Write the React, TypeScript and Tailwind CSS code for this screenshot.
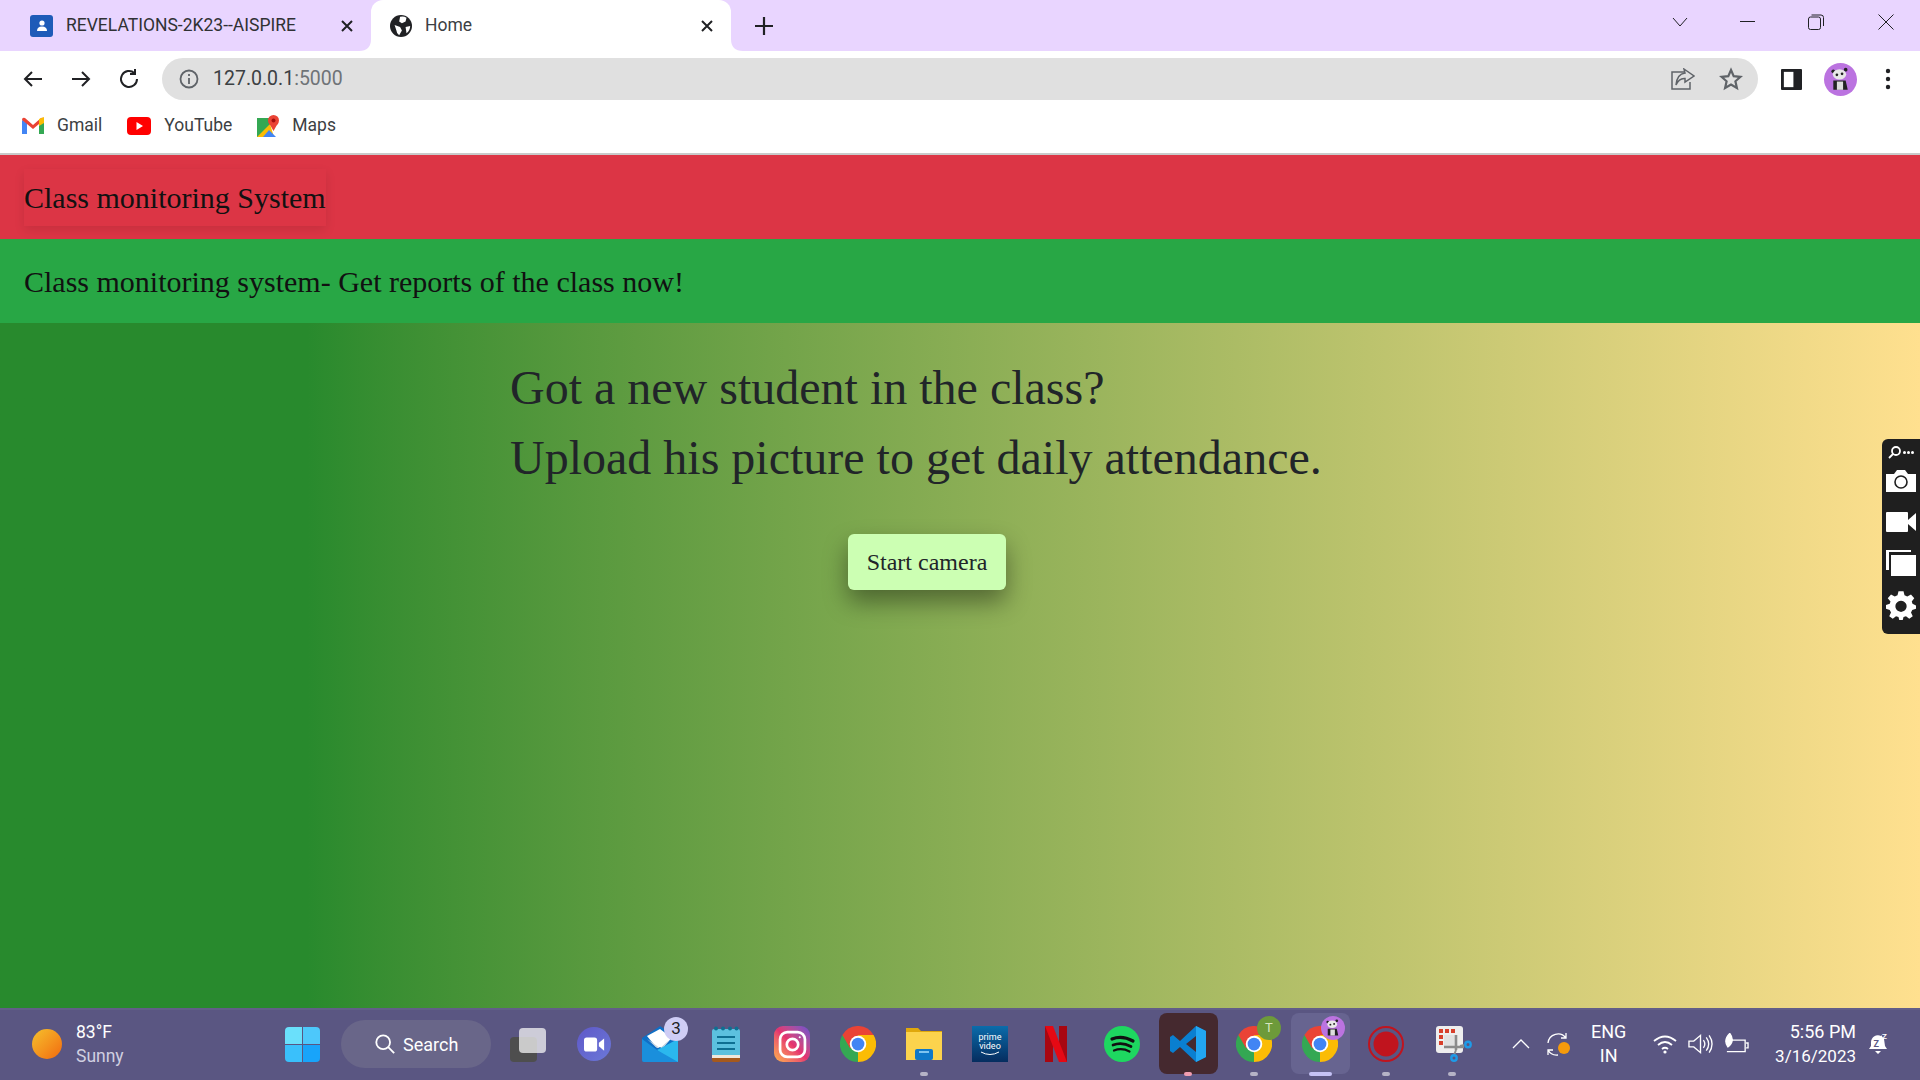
import React from "react";

const ui = "font-['Roboto',sans-serif]";

function ChromeIcon() {
  return (
    <svg viewBox="0 0 48 48" className="w-9 h-9">
      <path d="M24 24 L44.8 12 A24 24 0 0 0 3.2 12 Z" fill="#ea4335" />
      <path d="M24 24 L3.2 12 A24 24 0 0 0 24 48 Z" fill="#34a853" />
      <path d="M24 24 L24 48 A24 24 0 0 0 44.8 12 Z" fill="#fbbc05" />
      <path d="M24 12 L44.8 12 L34.4 30 Z" fill="#fbbc05" />
      <path d="M24 12 L3.2 12 L13.6 30 Z" fill="#ea4335" />
      <circle cx="24" cy="24" r="11" fill="#fff" />
      <circle cx="24" cy="24" r="8.5" fill="#4285f4" />
    </svg>
  );
}

function PandaFace({ size }: { size: string }) {
  return (
    <svg viewBox="0 0 32 32" className={size}>
      <circle cx="16" cy="16" r="16" fill="#bb73e0" />
      <circle cx="9" cy="8" r="1.8" fill="#222" />
      <circle cx="21" cy="6.5" r="1.8" fill="#222" />
      <ellipse cx="15" cy="11" rx="6.5" ry="5" fill="#e8e8e8" />
      <circle cx="12.5" cy="11.5" r="1.3" fill="#222" />
      <circle cx="17.5" cy="10.5" r="1.3" fill="#222" />
      <path d="M9 17 H21 L23 26 H9 Z" fill="#222" />
      <rect x="12.5" y="18" width="6" height="8" fill="#ddd" />
    </svg>
  );
}

function TabClose() {
  return (
    <svg viewBox="0 0 16 16" className="w-4 h-4" stroke="#202124" strokeWidth="2">
      <path d="M3 3 L13 13 M13 3 L3 13" />
    </svg>
  );
}

function Bookmark({ icon, label }: { icon: React.ReactNode; label: string }) {
  return (
    <div className="flex items-center gap-[13px]">
      {icon}
      <span className="text-[17.5px] text-[#3c4043] leading-none">{label}</span>
    </div>
  );
}

function Slot({ children, dot, dotClass }: { children: React.ReactNode; dot?: boolean; dotClass?: string }) {
  return (
    <div className="relative w-[66px] h-[60px] flex items-center justify-center shrink-0">
      {children}
      {dot && <span className={"absolute bottom-[-2px] h-[4px] rounded-full " + (dotClass || "w-[8px] bg-[#b5b3c6]")}></span>}
    </div>
  );
}

function Taskbar() {
  return (
    <div className={"h-[72px] shrink-0 bg-[#5a5682] border-t-2 border-[#625e88] pb-[2px] flex items-center text-white " + ui}>
      {/* weather */}
      <div className="w-[262px] pl-8 flex items-center gap-[14px] shrink-0">
        <div className="w-[30px] h-[30px] rounded-full bg-gradient-to-br from-[#f4c02c] to-[#f0680f]"></div>
        <div className="text-[17.5px] leading-[24px]">
          <div>83°F</div>
          <div className="text-[#d0cfe0]">Sunny</div>
        </div>
      </div>
      {/* start */}
      <div className="w-[79px] shrink-0 flex">
        <div className="grid grid-cols-2 gap-[1px] w-[35px] h-[35px] ml-[23px]">
          <span className="bg-[#6ae0fb] rounded-tl-sm"></span>
          <span className="bg-[#4dc8fb] rounded-tr-sm"></span>
          <span className="bg-[#3ac0fb] rounded-bl-sm"></span>
          <span className="bg-[#18a4fa] rounded-br-sm"></span>
        </div>
      </div>
      {/* search */}
      <div className="w-[150px] h-[48px] shrink-0 rounded-full bg-[#696689] flex items-center pl-[33px] gap-[7px]">
        <svg viewBox="0 0 24 24" className="w-[22px] h-[22px]" fill="none" stroke="#fff" strokeWidth="2">
          <circle cx="10" cy="10" r="7.5" />
          <path d="M15.5 15.5 L22 22" />
        </svg>
        <span className="text-[18px]">Search</span>
      </div>
      {/* pinned apps */}
      <div className="flex items-center ml-[4px]">
        <Slot>
          <div className="relative w-9 h-[34px] mt-[2px]">
            <div className="absolute left-0 bottom-0 w-[27px] h-[25px] rounded-sm bg-[#4e4e4e]"></div>
            <div className="absolute right-0 top-0 w-[27px] h-[25px] rounded-sm bg-[#f4f4f4]/75"></div>
          </div>
        </Slot>
        <Slot>
          <div className="w-[34px] h-[34px] rounded-full bg-gradient-to-br from-[#5f58c8] to-[#6b78d8] flex items-center justify-center">
            <svg viewBox="0 0 24 16" className="w-[21px] h-[15px]">
              <rect x="0" y="0" width="15" height="16" rx="3" fill="#fff" />
              <path d="M17 6 L23 1 V15 L17 10 Z" fill="#fff" />
            </svg>
          </div>
        </Slot>
        <Slot>
          <svg viewBox="0 0 36 36" className="w-9 h-9">
            <path d="M0 12 L18 0 L36 12 V34 Q36 36 34 36 H2 Q0 36 0 34 Z" fill="#0f6fc6" />
            <path d="M5 10 L18 3 L30 12 L20 21 H14 Z" fill="#fff" />
            <path d="M5 13 L15 22 H21 L28 14 L18 22 Z" fill="#cfd8e0" />
            <path d="M36 13 V36 H30 L15 24 Z" fill="#2bb8ee" />
            <path d="M0 13 L15 24 L36 36 H2 Q0 36 0 34 Z" fill="#1a8fdc" />
          </svg>
          <span className="absolute top-[3px] left-[37px] w-[24px] h-[24px] rounded-full bg-[#cfcdf5] text-[#222] text-[17px] flex items-center justify-center">3</span>
        </Slot>
        <Slot>
          <svg viewBox="0 0 28 36" className="w-[28px] h-9">
            <path d="M0 28 H28 V34 Q28 36 26 36 H2 Q0 36 0 34 Z" fill="#a5591d" />
            <rect x="0" y="28" width="28" height="4" fill="#f0e8dc" />
            <path d="M0 5 Q0 3 2 3 H26 Q28 3 28 5 V29 H0 Z" fill="#5cc1df" />
            <path d="M5 11 H23 M5 17 H23 M5 23 H23" stroke="#0e6f92" strokeWidth="2.2" />
            <circle cx="4" cy="2.5" r="2" fill="#0e6f92" />
            <circle cx="11" cy="2.5" r="2" fill="#0e6f92" />
            <circle cx="18" cy="2.5" r="2" fill="#0e6f92" />
            <circle cx="24.5" cy="2.5" r="2" fill="#0e6f92" />
          </svg>
        </Slot>
        <Slot>
          <div className="w-9 h-9 rounded-[9px] bg-gradient-to-tr from-[#fdb045] via-[#e5326e] to-[#6b4cd0] flex items-center justify-center">
            <svg viewBox="0 0 28 28" className="w-[29px] h-[29px]" fill="none" stroke="#fff" strokeWidth="2.6">
              <rect x="2" y="2" width="24" height="24" rx="7" />
              <circle cx="14" cy="14" r="5.5" />
              <circle cx="21" cy="7" r="1" fill="#fff" stroke="none" />
            </svg>
          </div>
        </Slot>
        <Slot><ChromeIcon /></Slot>
        <Slot dot>
          <svg viewBox="0 0 36 36" className="w-9 h-9">
            <path d="M0 2 H12 L15 5 H36 V34 H0 Z" fill="#e0a80c" />
            <rect x="0" y="6" width="36" height="28" fill="#fcd34d" />
            <rect x="9" y="23" width="18" height="11" rx="2" fill="#0f78c8" />
            <rect x="13" y="25" width="10" height="2" fill="#7ec4f0" />
          </svg>
        </Slot>
        <Slot>
          <div className="w-9 h-9 bg-gradient-to-b from-[#0b6cab] to-[#062d5f] flex flex-col items-center justify-center text-white text-[9px] leading-[9px]">
            <span>prime</span>
            <span>video</span>
            <svg viewBox="0 0 20 5" className="w-[20px] h-[5px]" fill="none" stroke="#fff" strokeWidth="1"><path d="M1 1 Q10 6 19 1" /></svg>
          </div>
        </Slot>
        <Slot>
          <svg viewBox="0 0 22 36" className="w-[22px] h-9">
            <path d="M0 0 H8 V36 L0 36 Z" fill="#a80711" />
            <path d="M14 0 H22 V36 L14 36 Z" fill="#a80711" />
            <path d="M0 0 H8 L22 36 H14 Z" fill="#e50914" />
          </svg>
        </Slot>
        <Slot>
          <svg viewBox="0 0 36 36" className="w-9 h-9" fill="none" stroke="#111" strokeLinecap="round">
            <circle cx="18" cy="18" r="18" fill="#1ed760" stroke="none" />
            <path d="M8 13 Q18 9 29 15" strokeWidth="3.2" />
            <path d="M9 19 Q18 15.5 27 20.5" strokeWidth="2.7" />
            <path d="M10 24.5 Q18 21.5 25.5 25.5" strokeWidth="2.2" />
          </svg>
        </Slot>
        <Slot dot dotClass="w-[8px] bg-[#f19eb0]">
          <div className="absolute left-[3.5px] -top-[1px] w-[59px] h-[61px] rounded-lg bg-[#45292f]"></div>
          <svg viewBox="0 0 36 36" className="relative w-9 h-9">
            <path d="M26 0 L36 5 V31 L26 36 L10 21 L3 27 L0 25 V11 L3 9 L10 15 Z M26 10 L16 18 L26 26 Z" fill="#0a7fd0" fillRule="evenodd" />
            <path d="M26 0 L36 5 V31 L26 36 Z" fill="#22a6f2" />
          </svg>
        </Slot>
        <Slot dot>
          <ChromeIcon />
          <span className="absolute top-[2px] left-[36px] w-[24px] h-[24px] rounded-full bg-[#6d9a3a] text-[#d8e6c0] text-[13px] flex items-center justify-center">T</span>
        </Slot>
        <Slot dot dotClass="w-[23px] bg-[#c5c2f5]">
          <div className="absolute left-[3.5px] -top-[1px] w-[59px] h-[61px] rounded-lg bg-[#676490]"></div>
          <div className="relative"><ChromeIcon /></div>
          <span className="absolute top-[2px] left-[34px]"><PandaFace size="w-[24px] h-[24px]" /></span>
        </Slot>
        <Slot dot>
          <svg viewBox="0 0 36 36" className="w-9 h-9">
            <circle cx="18" cy="18" r="17" fill="none" stroke="#c0141e" strokeWidth="2" />
            <circle cx="18" cy="18" r="12.5" fill="#c0141e" />
          </svg>
        </Slot>
        <Slot dot>
          {/* snipping tool */}
          <svg viewBox="0 0 36 36" className="w-9 h-9 ml-[3px]" fill="none">
            <rect x="0" y="0" width="27" height="27" rx="3" fill="#eee" />
            <rect x="3" y="3" width="4" height="4" fill="#d8402c" />
            <rect x="9" y="3" width="4" height="4" fill="#d8402c" />
            <rect x="15" y="3" width="4" height="4" fill="#d8402c" />
            <rect x="3" y="9" width="4" height="4" fill="#d8402c" />
            <rect x="3" y="15" width="4" height="4" fill="#d8402c" />
            <path d="M8 9 H20 V20 H8 Z" fill="#e2e2e2" />
            <path d="M20 9 V24 M8 21 H28" stroke="#8c8c8c" strokeWidth="2.6" />
            <path d="M20 24 L18 29 M24 20 L28 19" stroke="#8c8c8c" strokeWidth="2" />
            <circle cx="32" cy="18.5" r="2.7" stroke="#1e9be8" strokeWidth="2.4" />
            <circle cx="18" cy="32" r="2.7" stroke="#1e9be8" strokeWidth="2.4" />
          </svg>
        </Slot>
      </div>
      {/* tray */}
      <div className="flex items-center flex-1">
        <svg viewBox="0 0 18 10" className="w-[18px] h-[10px] ml-[27px]" fill="none" stroke="#fff" strokeWidth="1.3"><path d="M1 9 L9 1 L17 9" /></svg>
        <svg viewBox="0 0 24 24" className="w-[24px] h-[24px] ml-[16px]" fill="none" stroke="#fff" strokeWidth="1.3">
          <path d="M2 11 A10 10 0 0 1 20 6 M20 1 V6 H15" />
          <path d="M2 23 V18 H7 M2 18 A10 10 0 0 0 12 23" />
          <circle cx="18" cy="16" r="6" fill="#f59a0c" stroke="none" />
        </svg>
        <div className="text-[18px] leading-[24px] text-center ml-[21px]">
          <div>ENG</div>
          <div>IN</div>
        </div>
        <svg viewBox="0 0 24 20" className="w-[24px] h-[20px] ml-[27px]" fill="none" stroke="#fff" strokeWidth="1.8">
          <path d="M1 7 Q12 -2 23 7 M5 11 Q12 5 19 11 M9 15 Q12 12.5 15 15" />
          <circle cx="12" cy="18" r="1.6" fill="#fff" stroke="none" />
        </svg>
        <svg viewBox="0 0 26 22" className="w-[25px] h-[22px] ml-[11px]" fill="none" stroke="#fff" strokeWidth="1.4">
          <path d="M1 8 H6 L13 2 V20 L6 14 H1 Z" />
          <path d="M16 7 Q19 11 16 15 M19 4 Q24 11 19 18 M22 2 Q28 11 22 20" />
        </svg>
        <svg viewBox="0 0 26 22" className="w-[25px] h-[22px] ml-[11px]" fill="none" stroke="#fff" strokeWidth="1.4">
          <path d="M6 7 H22 V19 H3" />
          <path d="M23 10 H25 V15 H23" />
          <path d="M6 0 Q-1 7 4 14 Q12 8 6 0 Z" fill="#fff" />
        </svg>
        <div className="ml-auto text-[18px] leading-[25px] text-right pr-[11px]">
          <div>5:56 PM</div>
          <div className="text-[17px]">3/16/2023</div>
        </div>
        <svg viewBox="0 0 22 24" className="w-[22px] h-[24px] mr-[31px]">
          <path d="M2 17 L4 14 V10 A7 7 0 0 1 14 4 V3 L17 7 L18 14 L20 17 Z M8 19 H14 L11 22 Z" fill="#fff" />
          <text x="6.5" y="14.5" fontSize="9" fontWeight="700" fill="#5a5682" fontFamily="Roboto, sans-serif">Z</text>
          <text x="15" y="7" fontSize="8" fontWeight="700" fill="#fff" fontFamily="Roboto, sans-serif">Z</text>
        </svg>
      </div>
    </div>
  );
}

export default function App() {
  return (
    <div className="relative w-full h-screen overflow-hidden flex flex-col font-['Liberation_Serif',serif] text-[#212529]">
      {/* tab strip */}
      <div className={"h-[51px] shrink-0 bg-[#e9d5ff] flex items-end " + ui}>
        <div className="w-[371px] h-full flex items-center pl-[30px] shrink-0">
          <div className="w-[23px] h-[22px] rounded-[3px] bg-[#1e5bb8] flex items-center justify-center">
            <svg viewBox="0 0 14 14" className="w-[14px] h-[14px]" fill="#fff">
              <circle cx="7" cy="4" r="2.6" />
              <path d="M2 12 Q2 7.5 7 7.5 Q12 7.5 12 12 Z" />
            </svg>
          </div>
          <span className="ml-[13px] text-[17.5px] text-[#303134] whitespace-nowrap">REVELATIONS-2K23--AISPIRE</span>
          <span className="ml-auto mr-[16px]"><TabClose /></span>
        </div>
        <div className="relative w-[360px] h-full bg-white rounded-t-[12px] flex items-center pl-[19px] shrink-0">
          <svg viewBox="0 0 12 12" className="absolute -left-3 bottom-0 w-3 h-3"><path d="M12 0 V12 H0 Q12 12 12 0 Z" fill="#fff" /></svg>
          <svg viewBox="0 0 12 12" className="absolute -right-3 bottom-0 w-3 h-3"><path d="M0 0 V12 H12 Q0 12 0 0 Z" fill="#fff" /></svg>
          <svg viewBox="0 0 24 24" className="w-[22px] h-[22px]">
            <circle cx="12" cy="12" r="12" fill="#202124" />
            <path d="M11 2 Q15 1 18 3 L17 7 L13 9 L10 7 Z M5 11 L11 13 L13 17 L10 22 Q7 20 7 17 Z M17 13 L22 12 Q22 17 18 20 Z" fill="#fff" />
          </svg>
          <span className="ml-[13px] text-[17.5px] text-[#3c4043]">Home</span>
          <span className="ml-auto mr-[16px]"><TabClose /></span>
        </div>
        <svg viewBox="0 0 18 18" className="w-[18px] h-[18px] ml-6 mb-[16px]" stroke="#202124" strokeWidth="2.2"><path d="M9 0 V18 M0 9 H18" /></svg>
        <div className="ml-auto h-full flex items-center pb-[8px]">
          <svg viewBox="0 0 16 10" className="w-4 h-[10px] mr-[52px]" fill="none" stroke="#202124" strokeWidth="1"><path d="M1 1 L8 9 L15 1" /></svg>
          <div className="w-[15px] h-[1px] bg-[#202124] mr-[53px]"></div>
          <svg viewBox="0 0 16 16" className="w-4 h-4 mr-[54px]" fill="none" stroke="#202124" strokeWidth="1">
            <rect x="0.5" y="3" width="12" height="12.5" rx="2" />
            <path d="M3.5 1 H13 Q15.5 1 15.5 3.5 V12" />
          </svg>
          <svg viewBox="0 0 16 16" className="w-4 h-4 mr-[26px]" stroke="#202124" strokeWidth="1"><path d="M0.5 0.5 L15.5 15.5 M15.5 0.5 L0.5 15.5" /></svg>
        </div>
      </div>

      {/* toolbar */}
      <div className={"h-[53px] shrink-0 bg-white flex items-center pl-[21px] pt-[3px] " + ui}>
        <svg viewBox="0 0 24 24" className="w-6 h-6 mr-6" fill="none" stroke="#202124" strokeWidth="2"><path d="M21 12 H4 M11 5 L4 12 L11 19" /></svg>
        <svg viewBox="0 0 24 24" className="w-6 h-6 mr-6" fill="none" stroke="#202124" strokeWidth="2"><path d="M3 12 H20 M13 5 L20 12 L13 19" /></svg>
        <svg viewBox="0 0 24 24" className="w-6 h-6 mr-[21px]" fill="none" stroke="#202124" strokeWidth="2"><path d="M20 12 A8 8 0 1 1 17.5 6.2 M18 2 V7 H13" /></svg>
        <div className="w-[1596px] h-[42px] rounded-full bg-[#e0e0e0] flex items-center pl-[17px] shrink-0">
          <svg viewBox="0 0 20 20" className="w-5 h-5" fill="none" stroke="#5f6368" strokeWidth="1.8">
            <circle cx="10" cy="10" r="8.5" />
            <path d="M10 9 V15 M10 5 V7" />
          </svg>
          <span className="ml-[14px] text-[19.5px] text-[#3c4043]">127.0.0.1<span className="text-[#6f7377]">:5000</span></span>
          <svg viewBox="0 0 24 22" className="w-6 h-[22px] ml-auto mr-[24px]" fill="none" stroke="#5f6368" strokeWidth="1.5">
            <path d="M13 4 H1 V21 H19 V14" />
            <path d="M13 1 L23 8 L14 14 V10.5 Q8 10 5 17 Q6 6 14 5 Z" fill="#e0e0e0" />
          </svg>
          <svg viewBox="0 0 24 24" className="w-6 h-6 mr-[15px]" fill="none" stroke="#5f6368" strokeWidth="2.2">
            <path d="M12 3 L14.7 9.2 L21.5 9.8 L16.4 14.3 L17.9 21 L12 17.5 L6.1 21 L7.6 14.3 L2.5 9.8 L9.3 9.2 Z" />
          </svg>
        </div>
        <svg viewBox="0 0 22 22" className="w-[21px] h-[21px] ml-[23px] shrink-0">
          <rect x="0" y="0" width="22" height="22" rx="1" fill="#202124" />
          <rect x="3" y="3" width="10" height="16" fill="#fff" />
        </svg>
        <span className="ml-[22px] shrink-0"><PandaFace size="w-[33px] h-[33px]" /></span>
        <svg viewBox="0 0 6 22" className="w-[6px] h-[22px] ml-[28px] shrink-0" fill="#202124">
          <circle cx="3" cy="3" r="2.2" /><circle cx="3" cy="11" r="2.2" /><circle cx="3" cy="19" r="2.2" />
        </svg>
      </div>

      {/* bookmarks */}
      <div className={"h-[49px] shrink-0 bg-white flex items-center pl-[22px] gap-[25px] pb-[6px] " + ui}>
        <Bookmark
          label="Gmail"
          icon={
            <svg viewBox="0 0 22 17" className="w-[22px] h-[17px]" fill="none">
              <path d="M0 3 V17 H5 V6 Z" fill="#4285f4" />
              <path d="M22 3 V17 H17 V6 Z" fill="#34a853" />
              <path d="M0 3 Q0 0 3 1 L11 8 L19 1 Q22 0 22 3 L17 7 L11 12 L5 7 Z" fill="#ea4335" />
              <path d="M17 2 L22 0 V6 L17 9 Z" fill="#fbbc05" />
            </svg>
          }
        />
        <Bookmark
          label="YouTube"
          icon={
            <svg viewBox="0 0 24 18" className="w-[24px] h-[18px]">
              <rect width="24" height="18" rx="4" fill="#f00" />
              <path d="M9.5 5 L16 9 L9.5 13 Z" fill="#fff" />
            </svg>
          }
        />
        <Bookmark
          label="Maps"
          icon={
            <svg viewBox="0 0 22 22" className="w-[22px] h-[22px]">
              <path d="M0 3 L13 3 L13 22 L0 22 Z" fill="#34a853" />
              <path d="M0 22 L13 9 L17 22 Z" fill="#fbbc05" />
              <path d="M6 22 L12 15 L19 22 Z" fill="#4285f4" />
              <circle cx="16.5" cy="5.5" r="5.5" fill="#ea4335" />
              <path d="M12 8 L16.5 16 L21 8 Z" fill="#ea4335" />
              <circle cx="16.5" cy="5.5" r="2" fill="#a50e0e" />
            </svg>
          }
        />
      </div>
      <div className="h-[2px] shrink-0 bg-[#c9c9c9]"></div>

      {/* page */}
      <div className="h-[84px] shrink-0 bg-[#dc3545] flex items-center pl-6 text-[30px] text-[#111]">
        <div className="h-[57px] flex items-center shadow-[0_4px_10px_rgba(0,0,0,0.1)]">Class monitoring System</div>
      </div>
      <div className="h-[84px] shrink-0 bg-[#28a745] flex items-center pl-6 text-[30px] text-[#111]">
        Class monitoring system- Get reports of the class now!
      </div>
      <div className="flex-1 min-h-0 bg-gradient-to-r from-[#288a2d] from-[16%] to-[#ffe08f] pl-[510px] pt-[30px]">
        <div className="text-[48px] leading-[70px]">
          <div>Got a new student in the class?</div>
          <div>Upload his picture to get daily attendance.</div>
        </div>
        <button className="ml-[338px] mt-[41px] w-[158px] h-[56px] rounded-[6px] bg-[#ccffb3] text-[24px] text-[#212529] shadow-[0_12px_24px_rgba(0,0,0,0.4)]">
          Start camera
        </button>
      </div>
      <Taskbar />

      {/* capture widget floats over the page */}
      <div className="absolute right-0 top-[439px] w-[38px] h-[195px] rounded-l-[6px] bg-[#1f1f1f] flex flex-col items-center">
        <div className="flex items-center gap-[1px] h-[26px] text-white">
          <svg viewBox="0 0 14 14" className="w-[14px] h-[14px]" fill="none" stroke="#fff" strokeWidth="1.8">
            <circle cx="8" cy="6" r="4" />
            <path d="M1 13 L5 9" />
          </svg>
          <span className="flex gap-[1px]">
            <i className="w-[3px] h-[3px] bg-white rounded-full"></i>
            <i className="w-[3px] h-[3px] bg-white rounded-full"></i>
            <i className="w-[3px] h-[3px] bg-white rounded-full"></i>
          </span>
        </div>
        <svg viewBox="0 0 30 22" className="w-[30px] h-[22px] mt-[5px] shrink-0">
          <path d="M0 4 H8 L11 0 H19 L22 4 H30 V22 H0 Z" fill="#fff" />
          <circle cx="15" cy="12" r="6" fill="none" stroke="#1f1f1f" strokeWidth="1.6" />
        </svg>
        <svg viewBox="0 0 30 20" className="w-[30px] h-[20px] mt-[20px] shrink-0">
          <rect x="0" y="0" width="22" height="20" rx="1" fill="#fff" />
          <path d="M22 8 L30 1 V19 L22 12 Z" fill="#fff" />
        </svg>
        <svg viewBox="0 0 30 26" className="w-[30px] h-[26px] mt-[18px] shrink-0" fill="#fff">
          <path d="M0 0 H25 V2 H3 V20 H0 Z" />
          <rect x="5" y="5" width="25" height="21" />
        </svg>
        <svg viewBox="0 0 24 24" className="w-[30px] h-[30px] mt-[14px] shrink-0" fill="#fff" fillRule="evenodd">
          <path d="M10 1 H14 L14.8 4.2 L17 5.2 L20 3.6 L22.6 6.6 L20.6 9.2 L21.2 11 L24 12.4 V15 L21 16 L20 18 L21.4 21 L18.6 23 L16 21 L14 21.6 L13.4 24 H10.6 L10 21.6 L8 21 L5.4 23 L2.6 21 L4 18 L3 16 L0 15 V12 L3 11 L3.6 9.2 L1.4 6.6 L4 3.6 L7 5.2 L9.2 4.2 Z M12 8.5 A4.5 4.5 0 1 0 12.01 8.5 Z" />
        </svg>
      </div>
    </div>
  );
}
